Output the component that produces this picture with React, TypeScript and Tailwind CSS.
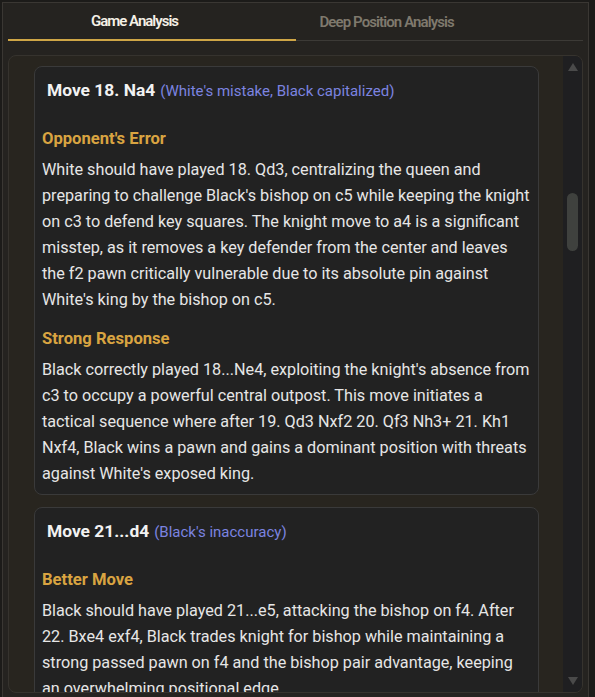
import React from 'react';

type Section = { heading: string; body: string };
type MoveCard = { move: string; note: string; sections: Section[] };

const cards: MoveCard[] = [
  {
    move: 'Move 18. Na4',
    note: "(White's mistake, Black capitalized)",
    sections: [
      {
        heading: "Opponent's Error",
        body: "White should have played 18. Qd3, centralizing the queen and preparing to challenge Black's bishop on c5 while keeping the knight on c3 to defend key squares. The knight move to a4 is a significant misstep, as it removes a key defender from the center and leaves the f2 pawn critically vulnerable due to its absolute pin against White's king by the bishop on c5.",
      },
      {
        heading: 'Strong Response',
        body: "Black correctly played 18...Ne4, exploiting the knight's absence from c3 to occupy a powerful central outpost. This move initiates a tactical sequence where after 19. Qd3 Nxf2 20. Qf3 Nh3+ 21. Kh1 Nxf4, Black wins a pawn and gains a dominant position with threats against White's exposed king.",
      },
    ],
  },
  {
    move: 'Move 21...d4',
    note: "(Black's inaccuracy)",
    sections: [
      {
        heading: 'Better Move',
        body: 'Black should have played 21...e5, attacking the bishop on f4. After 22. Bxe4 exf4, Black trades knight for bishop while maintaining a strong passed pawn on f4 and the bishop pair advantage, keeping an overwhelming positional edge.',
      },
    ],
  },
];

const Card: React.FC<{ card: MoveCard }> = ({ card }) => (
  <div className="rounded-lg border border-[#3a3a3a] bg-[#222222] px-[7px] pt-[9px] pb-[7px]">
    <div className="flex items-baseline gap-[5px] px-[5px] leading-[28px]">
      <span className="text-[17.4px] font-bold text-[#f2f2f2]">{card.move}</span>
      <span className="text-[15px] text-[#7c84e0]">{card.note}</span>
    </div>
    <div className="mt-[22px] flex flex-col gap-[14px]">
      {card.sections.map((s) => (
        <div key={s.heading}>
          <div className="text-[16.6px] font-bold leading-[24px] text-[#d9a441]">{s.heading}</div>
          <p className="mt-[6px] text-[16.2px] leading-[26px] text-[#e6e6e6]">{s.body}</p>
        </div>
      ))}
    </div>
  </div>
);

const ScrollBar: React.FC = () => (
  <div className="flex w-[19px] shrink-0 flex-col items-center bg-[#1f1f21] py-[6px]">
    <svg width="12" height="10" viewBox="0 0 12 10">
      <path d="M6 1 L11 9 L1 9 Z" fill="#4a4a4a" />
    </svg>
    <div className="mt-[121px] h-[58px] w-[11px] rounded-full bg-[#3f413e]" />
    <div className="flex-1" />
    <svg width="12" height="10" viewBox="0 0 12 10">
      <path d="M1 1 L11 1 L6 9 Z" fill="#4a4a4a" />
    </svg>
  </div>
);

export default function App() {
  return (
    <div
      className="h-[697px] w-[595px] overflow-hidden bg-[#1c1b19] pl-[2px] pt-[2px]"
      style={{ fontFamily: 'Roboto, "Noto Sans", sans-serif' }}
    >
      <div className="flex h-[700px] w-[587px] flex-col border-l border-r border-t border-[#3a3733] bg-[#252320] px-[5px]">
        <div className="grid h-[38px] grid-cols-2">
          <div className="flex items-center border-b-2 border-[#cfa646] pl-[83px] text-[15px] font-semibold tracking-[-1px] text-[#f5f0e6]">
            Game Analysis
          </div>
          <div className="flex items-center border-b border-[#3c3a36] pl-[24px] pt-[1px] text-[15px] font-semibold tracking-[-0.9px] text-[#7f796d]">
            Deep Position Analysis
          </div>
        </div>
        <div className="mt-[14px] flex h-[638px] overflow-hidden rounded-lg border border-[#36332e] bg-[#28251f]">
          <div className="flex flex-1 flex-col gap-[12px] overflow-hidden pl-[25px] pr-[24px] pt-[10px]">
            {cards.map((c) => (
              <Card key={c.move} card={c} />
            ))}
          </div>
          <ScrollBar />
        </div>
      </div>
    </div>
  );
}
